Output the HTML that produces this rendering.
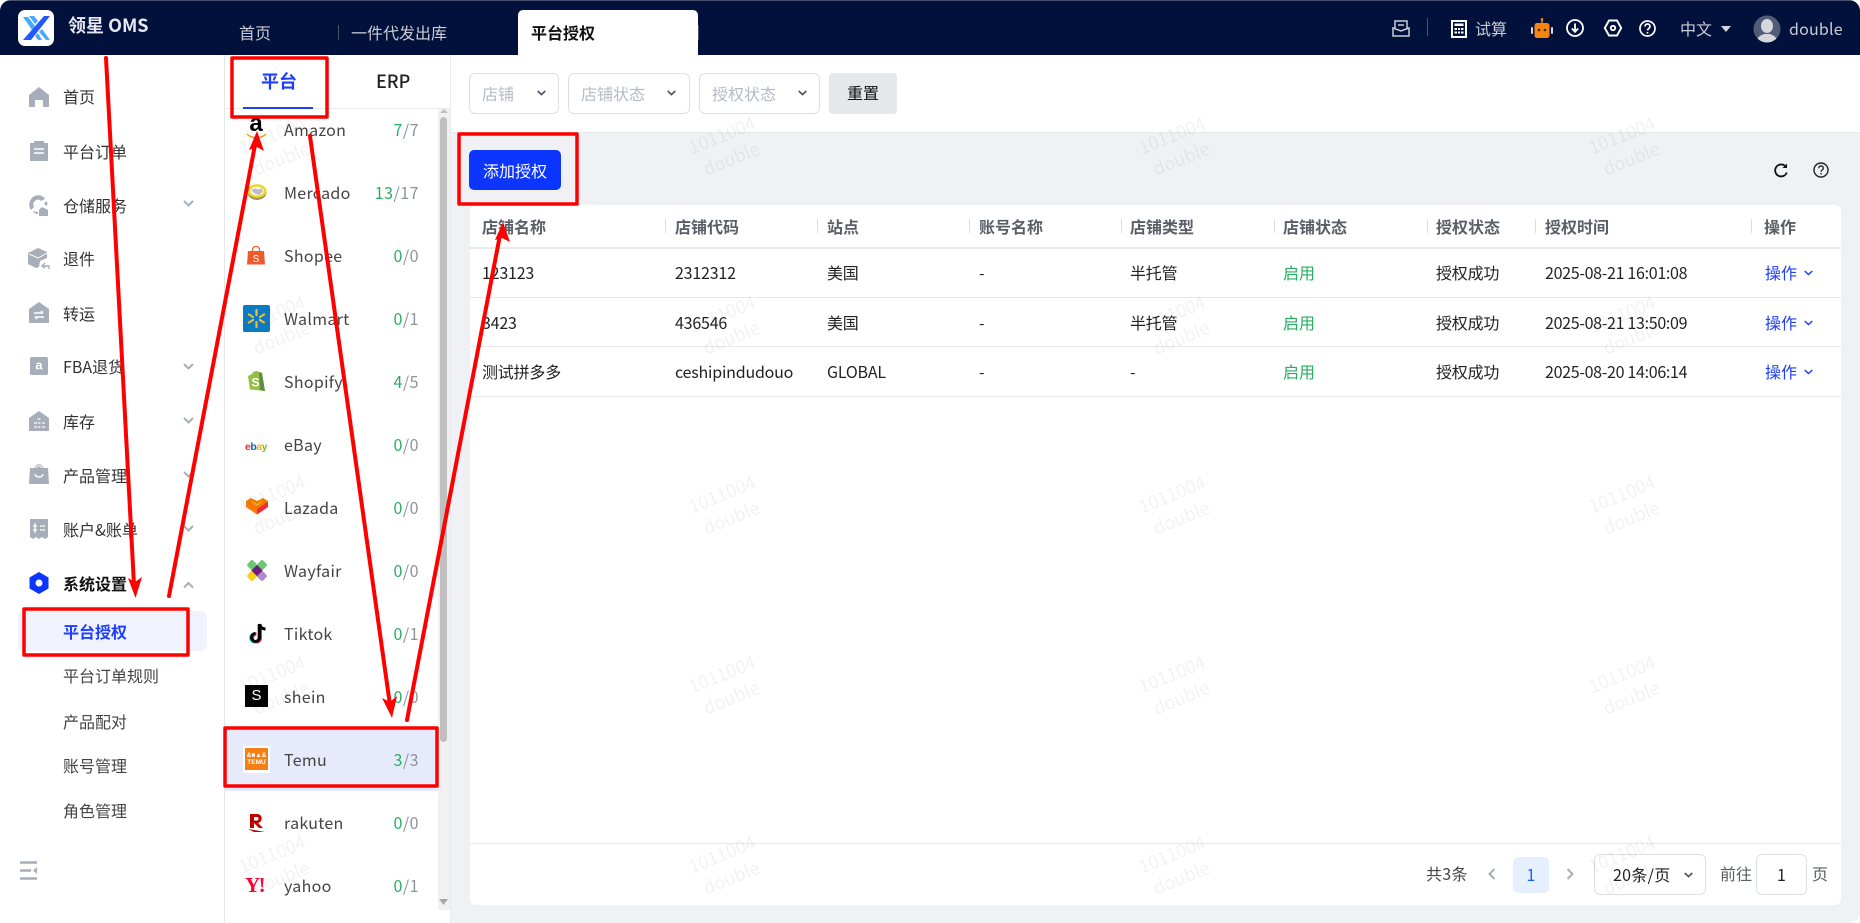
<!DOCTYPE html>
<html lang="zh-CN"><head><meta charset="utf-8"><title>领星 OMS</title>
<style>
*{box-sizing:border-box;margin:0;padding:0}
html,body{width:1860px;height:923px;overflow:hidden;background:#fff}
body{font-family:"Noto Sans CJK SC","Liberation Sans",sans-serif;font-size:16px;color:#333}
#f{position:absolute;left:0;top:0;width:1860px;height:923px;border-radius:11px;overflow:hidden;background:#fff}
.a{position:absolute}
.t{position:absolute;height:24px;line-height:24px;white-space:nowrap;margin-top:-1px}
.m{color:#333}
.th{color:#5a5e66;font-weight:700}
.td{color:#222;letter-spacing:-.2px}
.num{color:#222;letter-spacing:-.3px}
.g{color:#27ae60}
.b{color:#1d3dff}
.n{color:#444}
.l{color:#444;letter-spacing:.3px;left:284px}
.c{color:#8d929b;text-align:right;width:80px;left:339px;letter-spacing:.5px}
.c i{font-style:normal;color:#27ae60}
.ph{color:#b6bac2}
.sel{position:absolute;border:1px solid #dcdfe6;border-radius:6px;background:#fff}
.sep{position:absolute;width:1px;height:14px;top:219px;background:#dcdfe6}
.rl{position:absolute;left:470px;width:1371px;height:1px;background:#e6e8ec}
.wm{position:absolute;width:120px;text-align:center;font-size:18px;line-height:25px;color:rgba(0,0,0,.05);transform:rotate(-22deg);transform-origin:50% 12.5px;pointer-events:none;font-family:"Noto Sans CJK SC",sans-serif}
svg{position:absolute;overflow:visible}
</style></head><body><div id="f">

<!-- top bar -->
<div class="a" style="left:0;top:0;width:1860px;height:55px;background:#01113b"></div>
<div class="a" style="left:0;top:0;width:1860px;height:1px;background:#4a5270"></div>
<div class="a" style="left:18px;top:10px;width:36px;height:36px;background:#fff;border-radius:7px"></div>
<svg style="left:18px;top:10px" width="36" height="36" viewBox="0 0 36 36">
<path d="M26 6h6L13 30H5z" fill="#2457f5"/>
<path d="M5 7h5l7 9-3 4zM11 6h5l4 5-3 3z" fill="#49a9ff"/>
<path d="M21 22l3-3 8 11h-4zM17 26l3-3 4 7h-4z" fill="#49a9ff"/>
</svg>
<div class="t" style="left:68px;top:14px;color:#e6e9f0;font-weight:700;font-size:18px">领星 OMS</div>
<div class="t" style="left:239px;top:21px;color:#c9ccd4">首页</div>
<div class="a" style="left:338px;top:25px;width:1px;height:15px;background:#4a5270"></div>
<div class="t" style="left:351px;top:21px;color:#c9ccd4">一件代发出库</div>
<div class="a" style="left:518px;top:10px;width:180px;height:45px;background:#fff;border-radius:5px 5px 0 0"></div>
<div class="a" style="left:698px;top:25px;width:1px;height:15px;background:#4a5270"></div>
<div class="t" style="left:531px;top:21px;color:#111;font-weight:700">平台授权</div>

<svg style="left:1392px;top:19px" width="18" height="18" viewBox="0 0 18 18" fill="none" stroke="#c9ced8" stroke-width="1.5"><path d="M3 9V2h12v7M1 9l8 3 8-3v8H1zM6 6h6"/></svg>
<div class="a" style="left:1427px;top:18px;width:1px;height:18px;background:#4a5270"></div>
<svg style="left:1451px;top:20px" width="16" height="18" viewBox="0 0 16 18"><rect width="16" height="18" fill="#fff"/><rect x="2" y="2" width="12" height="14" fill="#01113b"/><rect x="3.500" y="3.500" width="9" height="2.500" fill="#fff"/><path d="M3.500 8h2.500v2H3.500zM7 8h2v2H7zM10 8h2.500v2H10zM3.500 11.500h2.500v2H3.500zM7 11.500h2v2H7zM10 11.500h2.500v2H10z" fill="#fff"/></svg>
<div class="t" style="left:1475px;top:17px;color:#c9ccd4">试算</div>
<svg style="left:1531px;top:18px" width="22" height="20" viewBox="0 0 22 20"><path d="M11 0v6" stroke="#f58512" stroke-width="1.500"/><circle cx="11" cy="1.500" r="1.300" fill="#f58512"/><rect x="3.500" y="5" width="15" height="15" rx="2.500" fill="#f58512"/><rect x="0" y="9" width="2" height="7" rx="1" fill="#d8dbe2"/><rect x="20" y="9" width="2" height="7" rx="1" fill="#d8dbe2"/><circle cx="8" cy="12" r="1.300" fill="#4a2a05"/><circle cx="14" cy="12" r="1.300" fill="#4a2a05"/></svg>
<svg style="left:1566px;top:19px" width="18" height="18" viewBox="0 0 18 18" fill="none" stroke="#fff"><circle cx="9" cy="9" r="8" stroke-width="1.800"/><path d="M9 4.500v8M5.800 9.500L9 12.800l3.200-3.300" stroke-width="1.800"/></svg>
<svg style="left:1604px;top:19px" width="18" height="18" viewBox="0 0 18 18" fill="none" stroke="#fff" stroke-width="1.900"><path d="M5 1.500h8L17.200 9 13 16.500H5L.800 9z"/><circle cx="9" cy="9" r="2.200"/></svg>
<svg style="left:1639px;top:20px" width="17" height="17" viewBox="0 0 17 17" fill="none" stroke="#fff" stroke-width="1.700"><circle cx="8.500" cy="8.500" r="7.500"/><path d="M6 6.500c0-3.300 5-3.300 5 0 0 2-2.500 2-2.500 4"/><path d="M8.500 12v1.500"/></svg>
<div class="t" style="left:1680px;top:17px;color:#c9ccd4">中文</div>
<svg style="left:1721px;top:26px" width="10" height="6" viewBox="0 0 10 6"><path d="M0 0h10L5 6z" fill="#d5d8df"/></svg>
<svg style="left:1753px;top:15px" width="28" height="28" viewBox="0 0 28 28"><defs><clipPath id="av"><circle cx="14" cy="14" r="13.500"/></clipPath></defs><circle cx="14" cy="14" r="13.500" fill="#515c76"/><g clip-path="url(#av)" fill="#d5d7dc"><ellipse cx="14" cy="11" rx="6" ry="7"/><path d="M3 28c1-7 6-8 8-9h6c2 1 7 2 8 9z"/></g></svg>
<div class="t" style="left:1789px;top:17px;color:#c9ccd4;font-size:16px;letter-spacing:.2px">double</div>

<!-- sidebar -->
<div class="a" style="left:224px;top:55px;width:1px;height:868px;background:#e4e6ea"></div>
<svg style="left:28px;top:87px" width="22" height="20" viewBox="0 0 22 20"><path d="M11 0L1 8v12h6v-7h8v7h6V8z" fill="#a7aeb9"/></svg>
<svg style="left:29px;top:141px" width="20" height="20" viewBox="0 0 20 20"><path d="M1 2h4V0h10v2h4v18H1z" fill="#a7aeb9"/><path d="M5 8h10M5 12h10" stroke="#fff" stroke-width="1.600"/></svg>
<svg style="left:28px;top:195px" width="22" height="21" viewBox="0 0 22 21"><path d="M5 2c4-3 10-2 12 2l-4 2c-2-2-4-2-6 0-2 1-2 4-1 6l-3 3C0 11 1 5 5 2z" fill="#a7aeb9"/><path d="M14 12l6 3v6h-9v-6z" fill="#a7aeb9"/><path d="M18 6c1 1 2 3 1 5l-3-2zM6 16c2 1 3 1 4 1v2c-2 0-3-1-5-2z" fill="#a7aeb9"/></svg>
<svg style="left:28px;top:248px" width="22" height="22" viewBox="0 0 22 22"><path d="M10 0l9 4v6l-7 3-1 6-3 1-8-4V5z" fill="#a7aeb9"/><path d="M1 6l9 4 9-5" stroke="#fff" stroke-width="1" fill="none"/><path d="M21 21v-3h-6M17 15l-3 3 3 2" stroke="#a7aeb9" stroke-width="1.400" fill="none"/></svg>
<svg style="left:29px;top:302px" width="20" height="21" viewBox="0 0 20 21"><path d="M10 0l10 7v14H0V7z" fill="#a7aeb9"/><path d="M5 11h9M12 9l2 2M15 15H6M8 17l-2-2" stroke="#fff" stroke-width="1.500" fill="none"/></svg>
<svg style="left:30px;top:357px" width="18" height="18" viewBox="0 0 18 18"><rect width="18" height="18" rx="2" fill="#a7aeb9"/><text x="9" y="12.500" text-anchor="middle" font-family="Liberation Sans" font-weight="700" font-size="13" fill="#fff">a</text></svg>
<svg style="left:29px;top:411px" width="20" height="20" viewBox="0 0 20 20"><path d="M10 0l10 7v13H0V7z" fill="#a7aeb9"/><path d="M8.500 8h3M5 12h3M9 12h2.500M13 12h3M5 16h3M9 16h2.500M13 16h3" stroke="#fff" stroke-width="1.300"/></svg>
<svg style="left:29px;top:464px" width="20" height="20" viewBox="0 0 20 20"><path d="M1 4h5c0-5 8-5 8 0h5l1 16H0z" fill="#a7aeb9"/><path d="M7.500 4c0-3 5-3 5 0" stroke="#fff" fill="none"/><path d="M6 10c1 4 7 4 8 0" stroke="#fff" stroke-width="1.500" fill="none"/></svg>
<svg style="left:30px;top:519px" width="18" height="20" viewBox="0 0 18 20"><path d="M0 0h18v18l-3 2-3-2-3 2-3-2-3 2-3-2z" fill="#a7aeb9"/><path d="M3 7h4M3 11h4M5 4v10M10 7h5M10 11h5" stroke="#fff" stroke-width="1.300"/></svg>
<svg style="left:29px;top:572px" width="20" height="22" viewBox="0 0 20 22"><path d="M10 0l9.500 5.500v11L10 22 .5 16.500v-11z" fill="#0c35ff"/><circle cx="10" cy="11" r="3.500" fill="#fff"/></svg>

<div class="t m" style="left:63px;top:85px">首页</div>
<div class="t m" style="left:63px;top:140px">平台订单</div>
<div class="t m" style="left:63px;top:194px">仓储服务</div>
<div class="t m" style="left:63px;top:247px">退件</div>
<div class="t m" style="left:63px;top:302px">转运</div>
<div class="t m" style="left:63px;top:355px">FBA退货</div>
<div class="t m" style="left:63px;top:410px">库存</div>
<div class="t m" style="left:63px;top:464px">产品管理</div>
<div class="t m" style="left:63px;top:518px">账户&amp;账单</div>
<div class="t" style="left:63px;top:572px;color:#111;font-weight:700">系统设置</div>
<svg style="left:183px;top:200px" width="11" height="8" viewBox="0 0 11 8" fill="none" stroke="#a7aeb9" stroke-width="2"><path d="M1 1l4.500 4.500L10 1"/></svg>
<svg style="left:183px;top:363px" width="11" height="8" viewBox="0 0 11 8" fill="none" stroke="#a7aeb9" stroke-width="2"><path d="M1 1l4.500 4.500L10 1"/></svg>
<svg style="left:183px;top:417px" width="11" height="8" viewBox="0 0 11 8" fill="none" stroke="#a7aeb9" stroke-width="2"><path d="M1 1l4.500 4.500L10 1"/></svg>
<svg style="left:183px;top:471px" width="11" height="8" viewBox="0 0 11 8" fill="none" stroke="#a7aeb9" stroke-width="2"><path d="M1 1l4.500 4.500L10 1"/></svg>
<svg style="left:183px;top:525px" width="11" height="8" viewBox="0 0 11 8" fill="none" stroke="#a7aeb9" stroke-width="2"><path d="M1 1l4.500 4.500L10 1"/></svg>
<svg style="left:183px;top:581px" width="11" height="8" viewBox="0 0 11 8" fill="none" stroke="#a7aeb9" stroke-width="2"><path d="M1 6.500L5.500 2 10 6.500"/></svg>

<div class="a" style="left:18px;top:611px;width:189px;height:40px;background:#f0f3fd;border-radius:6px"></div>
<div class="t b" style="left:63px;top:620px;font-weight:700">平台授权</div>
<div class="t n" style="left:63px;top:664px">平台订单规则</div>
<div class="t n" style="left:63px;top:710px">产品配对</div>
<div class="t n" style="left:63px;top:754px">账号管理</div>
<div class="t n" style="left:63px;top:799px">角色管理</div>
<svg style="left:19px;top:861px" width="20" height="19" viewBox="0 0 20 19"><path d="M1 1.500h17M1 9.500h11M1 17.500h17" stroke="#a7aeb9" stroke-width="2.500"/><path d="M18 6v7l-4-3.500z" fill="#a7aeb9"/></svg>

<!-- platform panel -->
<div class="a" style="left:225px;top:108px;width:225px;height:1px;background:#e8eaee"></div>
<div class="t b" style="left:261px;top:70px;font-weight:700;font-size:18px">平台</div>
<div class="a" style="left:243px;top:107px;width:70px;height:2px;background:#1d3dff"></div>
<div class="t" style="left:376px;top:70px;font-weight:500;color:#222;font-size:18px">ERP</div>
<div class="a" style="left:450px;top:55px;width:1px;height:868px;background:#e8eaee"></div>

<div class="a" style="left:225px;top:728px;width:213px;height:63px;background:#e6eafb"></div>
<div class="a" style="left:438px;top:109px;width:12px;height:801px;background:#f1f1f1"></div>
<div class="a" style="left:440px;top:117px;width:7px;height:625px;background:#bfbfbf;border-radius:4px"></div>
<svg style="left:440px;top:109px" width="8" height="5"><path d="M0 4L4 0l4 4z" fill="#c0c0c0"/></svg>
<svg style="left:439px;top:899px" width="9" height="6"><path d="M0 0h9L4.500 6z" fill="#a8a8a8"/></svg>

<!-- platform icons -->
<div class="a" style="left:246px;top:112px;width:20px;text-align:center;font:700 24px/24px 'Liberation Sans',sans-serif;color:#000">a</div>
<svg style="left:247px;top:133px" width="20" height="6" viewBox="0 0 20 6"><path d="M0 1c5 5 14 5 19 0" fill="none" stroke="#f90" stroke-width="1.500"/></svg>
<svg style="left:247px;top:183px" width="20" height="18" viewBox="0 0 20 18"><ellipse cx="10" cy="9.500" rx="9.500" ry="7.500" fill="#9c9468"/><ellipse cx="10" cy="8" rx="9.500" ry="6.800" fill="#efd80f"/><ellipse cx="10" cy="8" rx="7" ry="4.500" fill="#f5f5f5"/><path d="M4 7l4-1.500 3 1 4-1 1 3-4 3.500-4-1.500z" fill="#b9bcc6"/></svg>
<svg style="left:247px;top:246px" width="18" height="19" viewBox="0 0 18 19"><path d="M1 5h16l1 13.500H0z" fill="#ee5a2c"/><path d="M5.500 7V3.500c0-4 7-4 7 0V7" fill="none" stroke="#ee5a2c" stroke-width="1.300"/><text x="9" y="16" text-anchor="middle" font-size="10" font-family="Liberation Sans" fill="#fff">S</text></svg>
<div class="a" style="left:243px;top:305px;width:27px;height:27px;background:#0a7dc2;border-radius:2px"></div>
<svg style="left:243px;top:305px" width="27" height="27" viewBox="0 0 27 27" stroke="#fdbb30" stroke-width="2.200" stroke-linecap="round"><path d="M13.500 5v5M13.500 17v5M6 9.500l4 2.500M21 9.500l-4 2.500M6 17.500l4-2.500M21 17.500l-4-2.500"/></svg>
<svg style="left:247px;top:371px" width="18" height="20" viewBox="0 0 18 20"><path d="M1 5l4-2c1-3 5-4 7-2l3 1 3 18-15-1.500z" fill="#95bf47"/><path d="M12 1l3 1 3 18-5-1z" fill="#5e8e3e"/><text x="8.500" y="15.500" text-anchor="middle" font-size="12" font-weight="700" font-family="Liberation Sans" fill="#fff">S</text></svg>
<div class="a" style="left:245px;top:441px;font:700 10.500px/12px 'Liberation Sans',sans-serif;letter-spacing:-.5px"><span style="color:#e53238">e</span><span style="color:#0064d2">b</span><span style="color:#f5af02">a</span><span style="color:#86b817">y</span></div>
<svg style="left:246px;top:498px" width="22" height="17" viewBox="0 0 22 17"><path d="M0 3l5-3 6 3 6-3 5 3v6l-11 7.500L0 9z" fill="#f57c00"/><path d="M11 11L22 4v5l-11 7.500z" fill="#f0293e"/><path d="M5 3l6 3 6-3-6 5z" fill="#f9b132"/></svg>
<svg style="left:246px;top:560px" width="22" height="21" viewBox="0 0 22 21"><rect x="12" y="1" width="8" height="8" rx="2" transform="rotate(45 16 5)" fill="#6cc76f"/><rect x="2" y="1" width="8" height="8" rx="2" transform="rotate(45 6 5)" fill="#6cc76f"/><rect x="2" y="12" width="8" height="8" rx="2" transform="rotate(45 6 16)" fill="#f7d118"/><rect x="12" y="12" width="8" height="8" rx="2" transform="rotate(45 16 16)" fill="#b28ad4"/><rect x="7" y="6.500" width="8" height="8" transform="rotate(45 11 10.500)" fill="#6e1f7c"/></svg>
<svg style="left:247px;top:623px" width="19" height="22" viewBox="0 0 19 22"><path d="M12.500 1v13.500a4 4 0 1 1-4-4" fill="none" stroke="#25f4ee" stroke-width="3" transform="translate(-1 .5)"/><path d="M12.500 1v13.500a4 4 0 1 1-4-4" fill="none" stroke="#fe2c55" stroke-width="3" transform="translate(1 .5)"/><path d="M12.500 1v13.500a4 4 0 1 1-4-4" fill="none" stroke="#000" stroke-width="3"/><path d="M12.500 1c.5 3 3 5 6 5" fill="none" stroke="#000" stroke-width="3"/></svg>
<div class="a" style="left:245px;top:685px;width:23px;height:22px;background:#050505;color:#fff;text-align:center;font:400 15px/22px 'Liberation Sans',sans-serif">S</div>
<div class="a" style="left:243px;top:746px;width:27px;height:27px;background:#fff"></div>
<div class="a" style="left:245px;top:748px;width:23px;height:22px;background:#f67e12;color:#fff;text-align:center;font:700 6.500px/7px 'Liberation Sans',sans-serif;padding-top:4px">&amp;&#9632;&#9650;&amp;<br>TEMU</div>
<svg style="left:248px;top:813px" width="18" height="20" viewBox="0 0 18 20"><path d="M2 1h7c6 0 6 8 1 9l5 5h-4l-5-5v5H2z M6 4v3.500h3c2 0 2-3.500 0-3.500z" fill="#bf0000" fill-rule="evenodd"/><path d="M0 16l17 3-11 0z" fill="#bf0000"/></svg>
<div class="a" style="left:245px;top:875px;font:700 21px/20px 'Liberation Serif',serif;color:#ff0033;letter-spacing:-1.500px">Y!</div>

<div class="t l" style="top:118px">Amazon</div><div class="t c" style="top:118px"><i>7</i>/7</div>
<div class="t l" style="top:181px">Mercado</div><div class="t c" style="top:181px"><i>13</i>/17</div>
<div class="t l" style="top:244px">Shopee</div><div class="t c" style="top:244px"><i>0</i>/0</div>
<div class="t l" style="top:307px">Walmart</div><div class="t c" style="top:307px"><i>0</i>/1</div>
<div class="t l" style="top:370px">Shopify</div><div class="t c" style="top:370px"><i>4</i>/5</div>
<div class="t l" style="top:433px">eBay</div><div class="t c" style="top:433px"><i>0</i>/0</div>
<div class="t l" style="top:496px">Lazada</div><div class="t c" style="top:496px"><i>0</i>/0</div>
<div class="t l" style="top:559px">Wayfair</div><div class="t c" style="top:559px"><i>0</i>/0</div>
<div class="t l" style="top:622px">Tiktok</div><div class="t c" style="top:622px"><i>0</i>/1</div>
<div class="t l" style="top:685px">shein</div><div class="t c" style="top:685px"><i>0</i>/0</div>
<div class="t l" style="top:748px">Temu</div><div class="t c" style="top:748px"><i>3</i>/3</div>
<div class="t l" style="top:811px">rakuten</div><div class="t c" style="top:811px"><i>0</i>/0</div>
<div class="t l" style="top:874px">yahoo</div><div class="t c" style="top:874px"><i>0</i>/1</div>

<!-- main -->
<div class="a" style="left:451px;top:132px;width:1409px;height:791px;background:#f0f1f5"></div>
<div class="a" style="left:451px;top:132px;width:1409px;height:1px;background:#e6e8ec"></div>

<div class="sel" style="left:469px;top:73px;width:90px;height:41px"></div>
<div class="sel" style="left:568px;top:73px;width:122px;height:41px"></div>
<div class="sel" style="left:699px;top:73px;width:121px;height:41px"></div>
<div class="t ph" style="left:482px;top:82px">店铺</div>
<div class="t ph" style="left:581px;top:82px">店铺状态</div>
<div class="t ph" style="left:712px;top:82px">授权状态</div>
<svg style="left:537px;top:90px" width="9" height="6" viewBox="0 0 9 6" fill="none" stroke="#555a63" stroke-width="1.800"><path d="M.7 1l3.800 3.500L8.300 1"/></svg>
<svg style="left:667px;top:90px" width="9" height="6" viewBox="0 0 9 6" fill="none" stroke="#555a63" stroke-width="1.800"><path d="M.7 1l3.800 3.500L8.300 1"/></svg>
<svg style="left:798px;top:90px" width="9" height="6" viewBox="0 0 9 6" fill="none" stroke="#555a63" stroke-width="1.800"><path d="M.7 1l3.800 3.500L8.300 1"/></svg>
<div class="a" style="left:829px;top:73px;width:68px;height:41px;background:#e6e7e9;border-radius:4px"></div>
<div class="t" style="left:847px;top:81px;color:#111">重置</div>

<div class="a" style="left:469px;top:150px;width:92px;height:40px;background:#0c35ff;border-radius:5px"></div>
<div class="t" style="left:483px;top:159px;color:#fff">添加授权</div>

<svg style="left:1774px;top:163px" width="15" height="15" viewBox="0 0 15 15" fill="none" stroke="#111" stroke-width="1.800"><path d="M12.800 9.500A6 6 0 1 1 11 2.800"/><path d="M13 .5v4.500H8.500z" fill="#111" stroke="none"/></svg>
<svg style="left:1813px;top:162px" width="16" height="16" viewBox="0 0 16 16" fill="none" stroke="#222" stroke-width="1.400"><circle cx="8" cy="8" r="7"/><path d="M5.800 6.200c0-3 4.500-3 4.500 0 0 1.800-2.300 1.800-2.300 3.600"/><path d="M8 11v1.500"/></svg>

<!-- table -->
<div class="a" style="left:470px;top:205px;width:1371px;height:700px;background:#fff;border-radius:6px"></div>
<div class="a" style="left:470px;top:247px;width:1371px;height:2px;background:#e8e9ed"></div>
<div class="rl" style="top:297px"></div>
<div class="rl" style="top:346px"></div>
<div class="rl" style="top:396px"></div>
<div class="rl" style="top:843px"></div>
<div class="sep" style="left:665px"></div><div class="sep" style="left:817px"></div><div class="sep" style="left:969px"></div><div class="sep" style="left:1121px"></div><div class="sep" style="left:1274px"></div><div class="sep" style="left:1427px"></div><div class="sep" style="left:1535px"></div><div class="sep" style="left:1751px"></div>

<div class="t th" style="left:482px;top:215px">店铺名称</div>
<div class="t th" style="left:675px;top:215px">店铺代码</div>
<div class="t th" style="left:827px;top:215px">站点</div>
<div class="t th" style="left:979px;top:215px">账号名称</div>
<div class="t th" style="left:1130px;top:215px">店铺类型</div>
<div class="t th" style="left:1283px;top:215px">店铺状态</div>
<div class="t th" style="left:1436px;top:215px">授权状态</div>
<div class="t th" style="left:1545px;top:215px">授权时间</div>
<div class="t th" style="left:1764px;top:215px">操作</div>

<div class="t td" style="left:482px;top:261px">123123</div>
<div class="t td" style="left:675px;top:261px">2312312</div>
<div class="t td" style="left:827px;top:261px">美国</div>
<div class="t td" style="left:979px;top:261px">-</div>
<div class="t td" style="left:1130px;top:261px">半托管</div>
<div class="t g" style="left:1283px;top:261px">启用</div>
<div class="t td" style="left:1436px;top:261px">授权成功</div>
<div class="t num" style="left:1545px;top:261px">2025-08-21 16:01:08</div>
<div class="t b" style="left:1765px;top:261px">操作</div>

<div class="t td" style="left:482px;top:311px">3423</div>
<div class="t td" style="left:675px;top:311px">436546</div>
<div class="t td" style="left:827px;top:311px">美国</div>
<div class="t td" style="left:979px;top:311px">-</div>
<div class="t td" style="left:1130px;top:311px">半托管</div>
<div class="t g" style="left:1283px;top:311px">启用</div>
<div class="t td" style="left:1436px;top:311px">授权成功</div>
<div class="t num" style="left:1545px;top:311px">2025-08-21 13:50:09</div>
<div class="t b" style="left:1765px;top:311px">操作</div>

<div class="t td" style="left:482px;top:360px">测试拼多多</div>
<div class="t td" style="left:675px;top:360px">ceshipindudouo</div>
<div class="t td" style="left:827px;top:360px">GLOBAL</div>
<div class="t td" style="left:979px;top:360px">-</div>
<div class="t td" style="left:1130px;top:360px">-</div>
<div class="t g" style="left:1283px;top:360px">启用</div>
<div class="t td" style="left:1436px;top:360px">授权成功</div>
<div class="t num" style="left:1545px;top:360px">2025-08-20 14:06:14</div>
<div class="t b" style="left:1765px;top:360px">操作</div>
<svg style="left:1804px;top:270px" width="9" height="6" viewBox="0 0 9 6" fill="none" stroke="#1d3dff" stroke-width="1.500"><path d="M.7 1l3.800 3.500L8.300 1"/></svg>
<svg style="left:1804px;top:320px" width="9" height="6" viewBox="0 0 9 6" fill="none" stroke="#1d3dff" stroke-width="1.500"><path d="M.7 1l3.800 3.500L8.300 1"/></svg>
<svg style="left:1804px;top:369px" width="9" height="6" viewBox="0 0 9 6" fill="none" stroke="#1d3dff" stroke-width="1.500"><path d="M.7 1l3.800 3.500L8.300 1"/></svg>

<!-- pagination -->
<div class="t" style="left:1426px;top:862px;color:#444;letter-spacing:.3px">共3条</div>
<svg style="left:1488px;top:868px" width="8" height="12" viewBox="0 0 8 12" fill="none" stroke="#a8adb6" stroke-width="2"><path d="M6.500 1L1.500 6l5 5"/></svg>
<div class="a" style="left:1513px;top:857px;width:36px;height:36px;background:#e6effe;border-radius:5px"></div>
<div class="t" style="left:1513px;top:863px;width:36px;text-align:center;color:#1d5cff">1</div>
<svg style="left:1566px;top:868px" width="8" height="12" viewBox="0 0 8 12" fill="none" stroke="#a8adb6" stroke-width="2"><path d="M1.500 1l5 5-5 5"/></svg>
<div class="sel" style="left:1594px;top:854px;width:112px;height:41px"></div>
<div class="t" style="left:1613px;top:863px;color:#222;letter-spacing:.3px">20条/页</div>
<svg style="left:1684px;top:872px" width="9" height="6" viewBox="0 0 9 6" fill="none" stroke="#555a63" stroke-width="1.800"><path d="M.7 1l3.800 3.500L8.300 1"/></svg>
<div class="t" style="left:1720px;top:862px;color:#5a5e66">前往</div>
<div class="sel" style="left:1756px;top:854px;width:51px;height:41px"></div>
<div class="t" style="left:1756px;top:863px;width:51px;text-align:center;color:#222">1</div>
<div class="t" style="left:1812px;top:862px;color:#5a5e66">页</div>

<!-- watermarks -->
<div class="wm" style="left:212px;top:123px">1011004<br>double</div><div class="wm" style="left:662px;top:123px">1011004<br>double</div><div class="wm" style="left:1112px;top:123px">1011004<br>double</div><div class="wm" style="left:1562px;top:123px">1011004<br>double</div>
<div class="wm" style="left:212px;top:302px">1011004<br>double</div><div class="wm" style="left:662px;top:302px">1011004<br>double</div><div class="wm" style="left:1112px;top:302px">1011004<br>double</div><div class="wm" style="left:1562px;top:302px">1011004<br>double</div>
<div class="wm" style="left:212px;top:482px">1011004<br>double</div><div class="wm" style="left:662px;top:482px">1011004<br>double</div><div class="wm" style="left:1112px;top:482px">1011004<br>double</div><div class="wm" style="left:1562px;top:482px">1011004<br>double</div>
<div class="wm" style="left:212px;top:662px">1011004<br>double</div><div class="wm" style="left:662px;top:662px">1011004<br>double</div><div class="wm" style="left:1112px;top:662px">1011004<br>double</div><div class="wm" style="left:1562px;top:662px">1011004<br>double</div>
<div class="wm" style="left:212px;top:842px">1011004<br>double</div><div class="wm" style="left:662px;top:842px">1011004<br>double</div><div class="wm" style="left:1112px;top:842px">1011004<br>double</div><div class="wm" style="left:1562px;top:842px">1011004<br>double</div>

<!-- annotations -->
<svg style="left:0;top:0" width="1860" height="923" viewBox="0 0 1860 923">
<g fill="none" stroke="#f00" stroke-width="3.500" stroke-linejoin="round">
<rect x="232" y="58" width="95" height="59"/>
<rect x="24" y="609" width="164" height="46"/>
<rect x="225" y="728" width="212" height="58"/>
<rect x="459" y="134" width="118" height="70"/>
</g>
<g stroke="#f00" stroke-width="4" stroke-linecap="round">
<line x1="106" y1="58" x2="134" y2="585"/>
<line x1="169" y1="596" x2="255" y2="145"/>
<line x1="310" y1="136" x2="390" y2="705"/>
<line x1="407" y1="720" x2="500" y2="235"/>
</g>
<g fill="#f00">
<polygon points="135.500,598 128,578 135,582 142,577"/>
<polygon points="257,131 264,151 257,147 249,150"/>
<polygon points="392,718 382,698 390,702 397,696"/>
<polygon points="503,222 510,242 502,238 495,240"/>
</g>
</svg>
</div></body></html>
